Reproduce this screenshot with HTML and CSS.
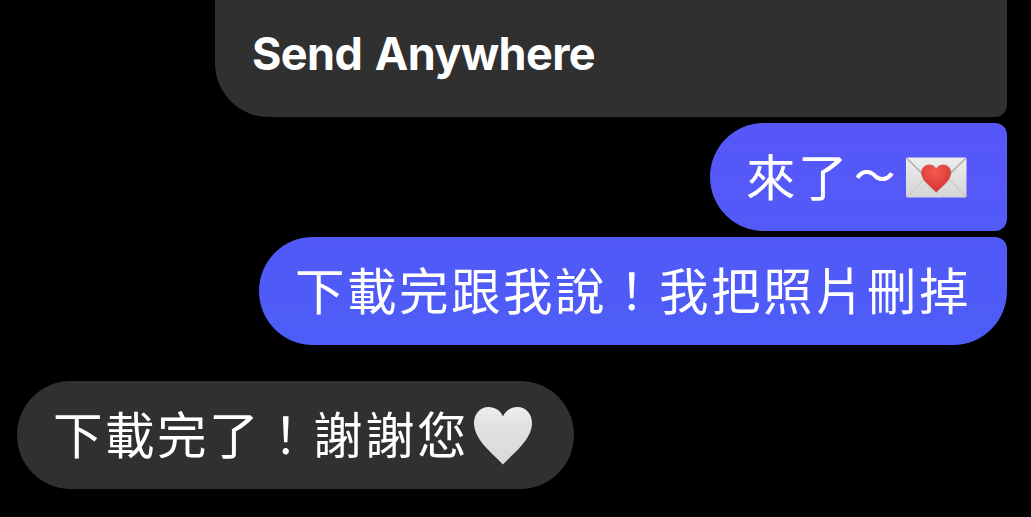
FILE: index.html
```
<!DOCTYPE html>
<html lang="zh-Hant">
<head>
  <meta charset="UTF-8">
  <meta name="viewport" content="width=device-width, initial-scale=1.0">
  <title>Chat</title>
  <link rel="stylesheet" href="styles.css">
</head>
<body>
  <main class="chat">
    <div class="bubble sent link-card">
      <span class="link-title">Send Anywhere</span>
    </div>
    <div class="bubble sent middle">
      <span class="text">來了<span class="tilde">～</span></span>
      <svg class="emoji" viewBox="0 0 69 60" role="img" aria-label="love letter">
        <defs>
          <linearGradient id="paper" x1="0" y1="0" x2="0" y2="1">
            <stop offset="0" stop-color="#ededed"/>
            <stop offset="1" stop-color="#d5d5d5"/>
          </linearGradient>
          <radialGradient id="red" cx="0.45" cy="0.25" r="0.8">
            <stop offset="0" stop-color="#f45a50"/>
            <stop offset="1" stop-color="#d4302f"/>
          </radialGradient>
        </defs>
        <rect x="4" y="10.500" width="60.5" height="40" rx="1.5" fill="url(#paper)"/>
        <path d="M5 49.500 L25 29 M63.500 49.500 L44 29" fill="none" stroke="#c2c2c2" stroke-width="1"/>
        <path d="M5 11.500 L29.500 36 Q34 40 38.500 36 L63.500 11.500" fill="none" stroke="#a9a9a9" stroke-width="1.300"/>
        <path d="M34.200 45.200 C29 39.500 19.600 34 19.600 25.600 C19.600 21 23 17.900 27.200 17.900 C30.500 17.900 33 19.500 34.200 22 C35.500 19.500 38 17.900 41.200 17.900 C45.500 17.900 48.800 21 48.800 25.600 C48.800 34 39.500 39.500 34.200 45.200Z" fill="url(#red)" stroke="#b94441" stroke-width="0.600"/>
      </svg>
    </div>
    <div class="bubble sent last">
      <span class="text">下載完跟我說！我把照片刪掉</span>
    </div>
    <div class="bubble received">
      <span class="text">下載完了！謝謝您</span>
      <svg class="emoji" viewBox="0 0 69 60" role="img" aria-label="white heart">
        <defs>
          <linearGradient id="white" x1="0" y1="0" x2="0" y2="1">
            <stop offset="0" stop-color="#eeeeee"/>
            <stop offset="0.25" stop-color="#e4e4e4"/>
            <stop offset="1" stop-color="#d8d8d8"/>
          </linearGradient>
        </defs>
        <path d="M34 59.500 C24 48.500 5 35 5 18 C5 9 11 2 19.500 2 C26 2 31.500 5.500 34 11.500 C36.500 5.500 42 2 48.500 2 C57 2 63 9 63 18 C63 35 44 48.500 34 59.500Z" fill="url(#white)"/>
      </svg>
    </div>
  </main>
</body>
</html>
```

FILE: styles.css
```
* {
  box-sizing: border-box;
}

body {
  margin: 0;
  background: #000;
  color: #fff;
  font-family: "Noto Sans CJK TC", sans-serif;
}

.chat {
  display: flex;
  flex-direction: column;
  gap: 6px;
  height: 517px;
  padding: 0 24px 0 17px;
  overflow: hidden;
}

.bubble {
  display: flex;
  align-items: center;
  flex-shrink: 0;
  height: 108px;
  padding: 0 36px;
  border-radius: 54px;
  white-space: nowrap;
}

.sent {
  align-self: flex-end;
}

.link-card {
  width: 792px;
  height: 117px;
  padding: 0 37px 9px;
  background: #303030;
  border-radius: 0 0 12px 54px;
}

.link-title {
  font-family: Inter, sans-serif;
  font-size: 45px;
  font-weight: 700;
  line-height: 54px;
  letter-spacing: -0.6px;
  word-spacing: 2.5px;
}

.middle {
  background: linear-gradient(#5757f8, #525af8);
  border-radius: 54px 12px 12px 54px;
}

.last {
  background: linear-gradient(#5159f7, #4d5df8);
  border-radius: 54px 12px 54px 54px;
}

.received {
  align-self: flex-start;
  margin-top: 30px;
  background: #303030;
}

.text {
  padding-bottom: 5px;
  font-size: 49.5px;
  font-weight: 400;
  line-height: 60px;
  letter-spacing: 2.5px;
}

/* the wave dash is drawn smaller than the characters around it */
.tilde {
  display: inline-block;
  width: 52px;
  padding-right: 3px;
  font-size: 41px;
  font-weight: 500;
  line-height: 40px;
  letter-spacing: 0;
  text-align: center;
  vertical-align: 5px;
}

.emoji {
  width: 69px;
  height: 60px;
}
```
